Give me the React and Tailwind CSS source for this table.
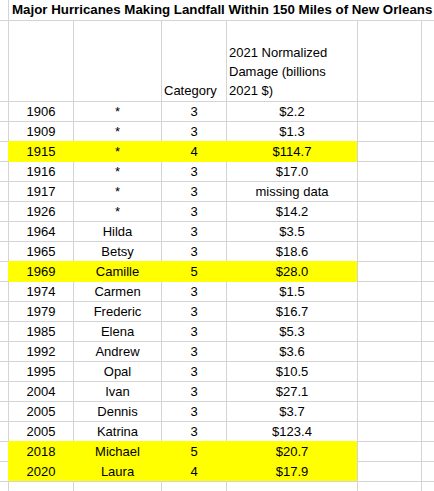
import React from "react";

const rows = [
  { year: "1906", name: "*", cat: "3", dmg: "$2.2" },
  { year: "1909", name: "*", cat: "3", dmg: "$1.3" },
  { year: "1915", name: "*", cat: "4", dmg: "$114.7", hl: true },
  { year: "1916", name: "*", cat: "3", dmg: "$17.0" },
  { year: "1917", name: "*", cat: "3", dmg: "missing data" },
  { year: "1926", name: "*", cat: "3", dmg: "$14.2" },
  { year: "1964", name: "Hilda", cat: "3", dmg: "$3.5" },
  { year: "1965", name: "Betsy", cat: "3", dmg: "$18.6" },
  { year: "1969", name: "Camille", cat: "5", dmg: "$28.0", hl: true },
  { year: "1974", name: "Carmen", cat: "3", dmg: "$1.5" },
  { year: "1979", name: "Frederic", cat: "3", dmg: "$16.7" },
  { year: "1985", name: "Elena", cat: "3", dmg: "$5.3" },
  { year: "1992", name: "Andrew", cat: "3", dmg: "$3.6" },
  { year: "1995", name: "Opal", cat: "3", dmg: "$10.5" },
  { year: "2004", name: "Ivan", cat: "3", dmg: "$27.1" },
  { year: "2005", name: "Dennis", cat: "3", dmg: "$3.7" },
  { year: "2005", name: "Katrina", cat: "3", dmg: "$123.4" },
  { year: "2018", name: "Michael", cat: "5", dmg: "$20.7", hl: true },
  { year: "2020", name: "Laura", cat: "4", dmg: "$17.9", hl: true },
];

// column widths incl. the 1px left gridline
const widths = ["w-[8px]", "w-[65px]", "w-[88px]", "w-[65px]", "w-[131px]", "w-[64px]", "flex-1"];

function Cell({ w, yellow, prevYellow, first, children }) {
  const fill = yellow ? "bg-[#ffff00] border-[#ffff00]" : "bg-white border-[#d4d4d4]";
  const top = yellow || prevYellow ? "border-t-[#ffff00]" : "";
  return (
    <div
      className={`${w} h-[20px] shrink-0 border-t ${first ? "" : "border-l"} ${fill} ${top} flex items-end justify-center pb-[1px] leading-[17px] whitespace-nowrap`}
    >
      {children}
    </div>
  );
}

export default function App() {
  return (
    <div
      className="w-[434px] h-[491px] overflow-hidden bg-white text-black text-[13px]"
      style={{ fontFamily: '"Liberation Sans", Arial, sans-serif' }}
    >
      {/* title row */}
      <div className="flex h-[20px]">
        <div className="w-[8px] shrink-0" />
        <div className="flex-1 border-l border-[#d4d4d4] pl-[3px] font-bold text-[13.3px] leading-[19px] whitespace-nowrap">
          Major Hurricanes Making Landfall Within 150 Miles of New Orleans
        </div>
      </div>

      {/* header row */}
      <div className="flex h-[81px]">
        {widths.map((w, i) => (
          <div
            key={i}
            className={`${w} shrink-0 border-t ${i ? "border-l" : ""} border-[#d4d4d4] flex flex-col justify-end pl-[2px] pb-[1px] leading-[19px]`}
          >
            {i === 3 && <span>Category</span>}
            {i === 4 && (
              <>
                <span>2021 Normalized</span>
                <span>Damage (billions</span>
                <span>2021 $)</span>
              </>
            )}
          </div>
        ))}
      </div>

      {/* data rows */}
      {rows.map((r, idx) => {
        const prev = idx > 0 && rows[idx - 1].hl;
        return (
          <div key={idx} className="flex">
            <Cell w={widths[0]} first />
            <Cell w={widths[1]} yellow={r.hl} prevYellow={prev}>{r.year}</Cell>
            <Cell w={widths[2]} yellow={r.hl} prevYellow={prev}>{r.name}</Cell>
            <Cell w={widths[3]} yellow={r.hl} prevYellow={prev}>{r.cat}</Cell>
            <Cell w={widths[4]} yellow={r.hl} prevYellow={prev}>{r.dmg}</Cell>
            <Cell w={widths[5]} />
            <Cell w={widths[6]} />
          </div>
        );
      })}
      <div className="flex">
        {widths.map((w, i) => (
          <Cell key={i} w={w} first={i === 0} />
        ))}
      </div>
    </div>
  );
}
